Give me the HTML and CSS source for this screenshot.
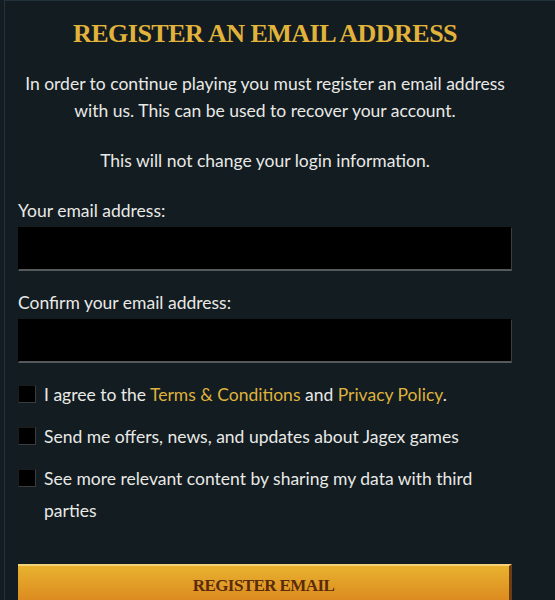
FILE: index.html
```html
<!DOCTYPE html>
<html lang="en">
<head>
    <meta charset="UTF-8">
    <meta name="viewport" content="width=device-width, initial-scale=1.0">
    <title>Register an email address</title>

    <link rel="stylesheet" href="styles.css">
</head>
<body>
    <div class="panel">
        <h1 class="title">Register an Email Address</h1>

        <p class="intro">In order to continue playing you must register an email address with us. This can be used to recover your account.</p>
        <p class="intro note">This will not change your login information.</p>

        <form class="form" onsubmit="return false">
            <div class="fields">
                <label class="field">
                    <span>Your email address:</span>
                    <input type="email" autocomplete="off">
                </label>

                <label class="field">
                    <span>Confirm your email address:</span>
                    <input type="email" autocomplete="off">
                </label>
            </div>

            <div class="checks">
                <label class="check">
                    <input type="checkbox">
                    <span>I agree to the <a href="#">Terms &amp; Conditions</a> and <a href="#">Privacy Policy</a>.</span>
                </label>
                <label class="check">
                    <input type="checkbox">
                    <span>Send me offers, news, and updates about Jagex games</span>
                </label>
                <label class="check">
                    <input type="checkbox">
                    <span>See more relevant content by sharing my data with third parties</span>
                </label>
            </div>

            <button class="submit" type="submit">Register Email</button>
        </form>
    </div>
</body>
</html>
```

FILE: styles.css
```css
* {
    box-sizing: border-box;
    margin: 0;
    padding: 0;
}

html, body {
    height: 100%;
    background: #121c21;
}

body {
    font-family: Lato, "Noto Sans", sans-serif;
    font-size: 17.5px;
    color: #e9e9e6;
    overflow: hidden;
}

.panel {
    margin-left: 4px;
    min-height: 100%;
    border-left: 1px solid #22323a;
    border-top: 1px solid #22323a;
    padding: 18px 43px 0 13px;
}

.title {
    font-family: "Liberation Serif", serif;
    font-weight: bold;
    font-size: 26px;
    line-height: 30px;
    letter-spacing: -0.5px;
    text-transform: uppercase;
    text-align: center;
    color: #e2b33b;
}

.intro {
    margin-top: 21px;
    line-height: 27px;
    text-align: center;
}

.intro.note {
    margin-top: 23px;
}

.form {
    margin-top: 27px;
}

.fields {
    display: flex;
    flex-direction: column;
    gap: 22px;
}

.field {
    display: flex;
    flex-direction: column;
    gap: 6px;
    line-height: 20px;
}

.field input {
    height: 44px;
    background: #000;
    border: 1px solid #000;
    border-right-color: #3c3f40;
    border-bottom: 2px solid #55595b;
    color: #fff;
    font: inherit;
    padding: 0 10px;
    outline: none;
}

.checks {
    display: flex;
    flex-direction: column;
    gap: 10px;
    margin-top: 16px;
}

.check {
    display: flex;
    align-items: flex-start;
    gap: 8px;
    line-height: 32px;
}

.check input {
    appearance: none;
    flex: none;
    width: 18px;
    height: 18px;
    margin-top: 6px;
    background: #000;
    border: 1px solid #1c1c1c;
    border-bottom-color: #3a3d3e;
    border-right-color: #3a3d3e;
}

.check a {
    color: #dfb23c;
    text-decoration: none;
}

.submit {
    display: block;
    width: 100%;
    height: 44px;
    margin-top: 37px;
    border: none;
    border-top: 2px solid #f3d27a;
    border-right: 3px solid #6e3c12;
    background: linear-gradient(#e8b22f, #d9821c);
    font-family: "Liberation Serif", serif;
    font-weight: bold;
    font-size: 17px;
    letter-spacing: -0.6px;
    text-transform: uppercase;
    color: #5b2b0c;
    padding-bottom: 3px;
}
```
